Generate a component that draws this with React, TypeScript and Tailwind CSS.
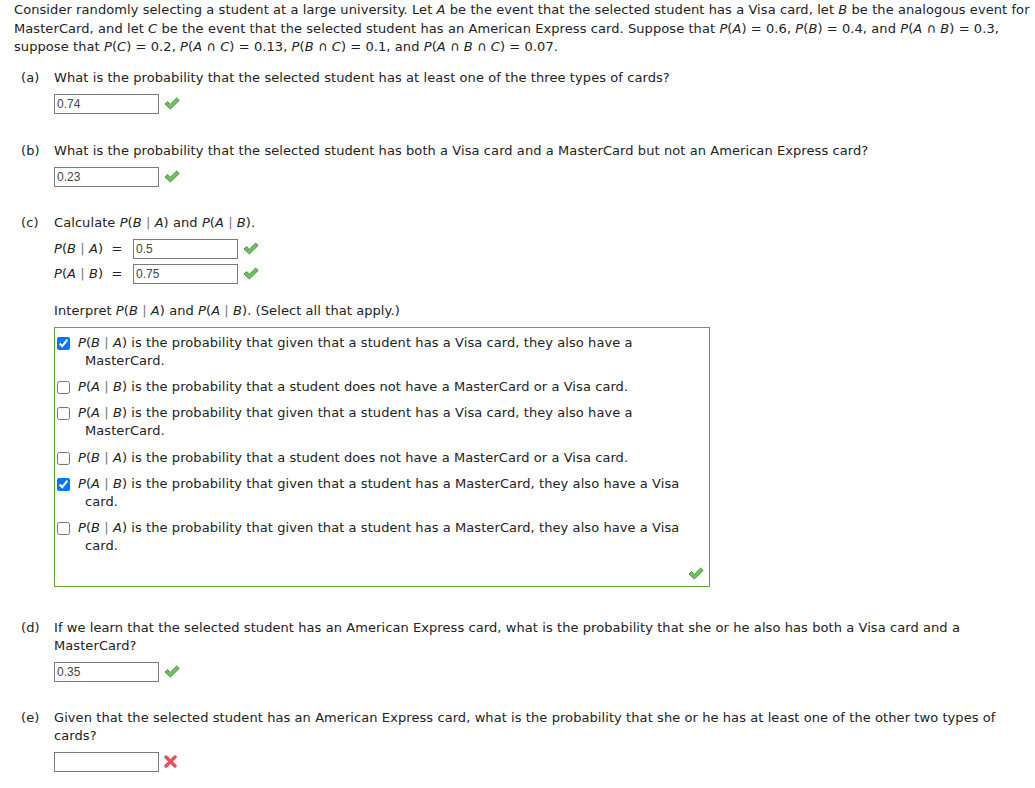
import React from "react";

function Check() {
  return (
    <svg width="16" height="13" viewBox="0 0 16 13" className="shrink-0">
      <path
        d="M1 7 L3.6 4.6 L6.4 7.2 L12.6 1 L15.2 3.4 L6.4 12 Z"
        fill="#6fc05f"
        stroke="#3f8d3a"
        strokeWidth="0.9"
        strokeLinejoin="round"
      />
    </svg>
  );
}

function Cross() {
  return (
    <svg width="13" height="13" viewBox="0 0 13 13" className="shrink-0">
      <path d="M2 2 L11 11 M11 2 L2 11" stroke="#ef4b5c" strokeWidth="3.4" strokeLinecap="round" />
    </svg>
  );
}

function V({ children }: { children: React.ReactNode }) {
  return <i>{children}</i>;
}

function Bar() {
  return <span className="text-[#777]"> | </span>;
}

function Answer({ value, ok = true }: { value: string; ok?: boolean }) {
  return (
    <div className="flex items-center gap-[5px]">
      <div className="w-[105px] h-[20px] border border-[#7a7a7a] bg-white pl-[2px] flex items-center font-['Liberation_Sans',Arial,sans-serif] text-[12px] tracking-normal text-[#444]">
        {value}
      </div>
      {ok ? <Check /> : <Cross />}
    </div>
  );
}

function Part({ label, children }: { label: string; children: React.ReactNode }) {
  return (
    <div className="flex">
      <div className="w-[40px] pl-[7px] shrink-0">{label}</div>
      <div className="flex-1">{children}</div>
    </div>
  );
}

function Option({ checked, children }: { checked?: boolean; children: React.ReactNode }) {
  return (
    <div className="flex items-start">
      <input
        type="checkbox"
        defaultChecked={checked}
        className="m-0 ml-[2px] mt-[3px] w-[13px] h-[13px] shrink-0"
      />
      <div className="ml-[8px] pl-[7px] -indent-[7px]">{children}</div>
    </div>
  );
}

export default function App() {
  return (
    <div className="w-[1035px] h-[788px] bg-white text-[#222] text-[13px] leading-[18px] tracking-[0.08px] font-['DejaVu_Sans',Verdana,sans-serif] pl-[14px] pt-[1px] overflow-hidden">
      <p className="leading-[18.5px] whitespace-nowrap">
        Consider randomly selecting a student at a large university. Let <V>A</V> be the event that the selected student has a Visa card, let <V>B</V> be the analogous event for
        <br />
        MasterCard, and let <V>C</V> be the event that the selected student has an American Express card. Suppose that <V>P</V>(<V>A</V>) = 0.6, <V>P</V>(<V>B</V>) = 0.4, and <V>P</V>(<V>A</V> ∩ <V>B</V>) = 0.3,
        <br />
        suppose that <V>P</V>(<V>C</V>) = 0.2, <V>P</V>(<V>A</V> ∩ <V>C</V>) = 0.13, <V>P</V>(<V>B</V> ∩ <V>C</V>) = 0.1, and <V>P</V>(<V>A</V> ∩ <V>B</V> ∩ <V>C</V>) = 0.07.
      </p>

      <div className="mt-[12px]">
        <Part label="(a)">
          <div>What is the probability that the selected student has at least one of the three types of cards?</div>
          <div className="mt-[7px]">
            <Answer value="0.74" />
          </div>
        </Part>
      </div>

      <div className="mt-[28px]">
        <Part label="(b)">
          <div>What is the probability that the selected student has both a Visa card and a MasterCard but not an American Express card?</div>
          <div className="mt-[7px]">
            <Answer value="0.23" />
          </div>
        </Part>
      </div>

      <div className="mt-[27px]">
        <Part label="(c)">
          <div>
            Calculate <V>P</V>(<V>B</V><Bar /><V>A</V>) and <V>P</V>(<V>A</V><Bar /><V>B</V>).
          </div>
          <div className="mt-[7px] flex flex-col gap-[5px]">
            <div className="flex items-center">
              <div className="w-[79px]">
                <V>P</V>(<V>B</V><Bar /><V>A</V>) &nbsp;=
              </div>
              <Answer value="0.5" />
            </div>
            <div className="flex items-center">
              <div className="w-[79px]">
                <V>P</V>(<V>A</V><Bar /><V>B</V>) &nbsp;=
              </div>
              <Answer value="0.75" />
            </div>
          </div>
          <div className="mt-[18px]">
            Interpret <V>P</V>(<V>B</V><Bar /><V>A</V>) and <V>P</V>(<V>A</V><Bar /><V>B</V>). (Select all that apply.)
          </div>
          <div className="mt-[7px] w-[656px] h-[260px] border border-[#5fa83a] pt-[6px] pr-[5px] flex flex-col">
            <div className="flex flex-col gap-[8.4px]">
              <Option checked>
                <V>P</V>(<V>B</V><Bar /><V>A</V>) is the probability that given that a student has a Visa card, they also have a
                <br />
                MasterCard.
              </Option>
              <Option>
                <V>P</V>(<V>A</V><Bar /><V>B</V>) is the probability that a student does not have a MasterCard or a Visa card.
              </Option>
              <Option>
                <V>P</V>(<V>A</V><Bar /><V>B</V>) is the probability that given that a student has a Visa card, they also have a
                <br />
                MasterCard.
              </Option>
              <Option>
                <V>P</V>(<V>B</V><Bar /><V>A</V>) is the probability that a student does not have a MasterCard or a Visa card.
              </Option>
              <Option checked>
                <V>P</V>(<V>A</V><Bar /><V>B</V>) is the probability that given that a student has a MasterCard, they also have a Visa
                <br />
                card.
              </Option>
              <Option>
                <V>P</V>(<V>B</V><Bar /><V>A</V>) is the probability that given that a student has a MasterCard, they also have a Visa
                <br />
                card.
              </Option>
            </div>
            <div className="mt-auto mb-[6px] flex justify-end">
              <Check />
            </div>
          </div>
        </Part>
      </div>

      <div className="mt-[32px]">
        <Part label="(d)">
          <div>
            If we learn that the selected student has an American Express card, what is the probability that she or he also has both a Visa card and a
            <br />
            MasterCard?
          </div>
          <div className="mt-[7px]">
            <Answer value="0.35" />
          </div>
        </Part>
      </div>

      <div className="mt-[27px]">
        <Part label="(e)">
          <div>
            Given that the selected student has an American Express card, what is the probability that she or he has at least one of the other two types of
            <br />
            cards?
          </div>
          <div className="mt-[7px]">
            <Answer value="" ok={false} />
          </div>
        </Part>
      </div>
    </div>
  );
}
